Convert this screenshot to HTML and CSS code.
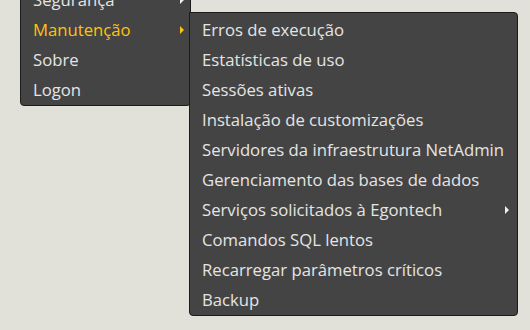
FILE: index.html
```html
<!DOCTYPE html>
<html lang="pt">
<head>
<meta charset="utf-8">
<link rel="stylesheet" href="styles.css">
</head>
<body>
<ul class="menu main">
  <li class="item">Segurança<span class="arrow white"></span></li>
  <li class="item active">Manutenção<span class="arrow yellow"></span>
    <ul class="menu sub">
      <li class="item">Erros de execução</li>
      <li class="item">Estatísticas de uso</li>
      <li class="item">Sessões ativas</li>
      <li class="item">Instalação de customizações</li>
      <li class="item">Servidores da infraestrutura NetAdmin</li>
      <li class="item">Gerenciamento das bases de dados</li>
      <li class="item">Serviços solicitados à Egontech<span class="arrow white"></span></li>
      <li class="item">Comandos SQL lentos</li>
      <li class="item">Recarregar parâmetros críticos</li>
      <li class="item">Backup</li>
    </ul>
  </li>
  <li class="item">Sobre</li>
  <li class="item">Logon</li>
</ul>
</body>
</html>
```
FILE: styles.css
```css
html, body {
  margin: 0;
  padding: 0;
  background: #e1e1d9;
  height: 100%;
  overflow: hidden;
}
body {
  padding-left: 20px;
  font-family: "Open Sans", "Noto Sans", sans-serif;
  font-size: 16.7px;
  color: #e4e4e4;
}
.menu {
  list-style: none;
  margin: 0;
  padding: 0;
  background: #444444;
  border: 1px solid #1c1c1c;
}
.main {
  width: 169px;
  margin-top: -16px;
  border-radius: 0 0 4px 4px;
}
.item {
  position: relative;
  height: 30px;
  line-height: 29px;
  padding-left: 12px;
  white-space: nowrap;
}
.active {
  color: #ffc20e;
}
.sub {
  position: absolute;
  left: 168px;
  top: -3px;
  width: 327px;
  padding: 2px 0 0;
  color: #e4e4e4;
  border-radius: 0 4px 4px 4px;
}
.arrow {
  position: absolute;
  top: 11px;
  right: 6px;
  width: 0;
  height: 0;
  border-top: 4px solid transparent;
  border-bottom: 4px solid transparent;
  border-left: 4px solid #ffc20e;
}
.arrow.white {
  border-left-color: #f0f0f0;
}
.sub .arrow {
  right: 8px;
}
```
